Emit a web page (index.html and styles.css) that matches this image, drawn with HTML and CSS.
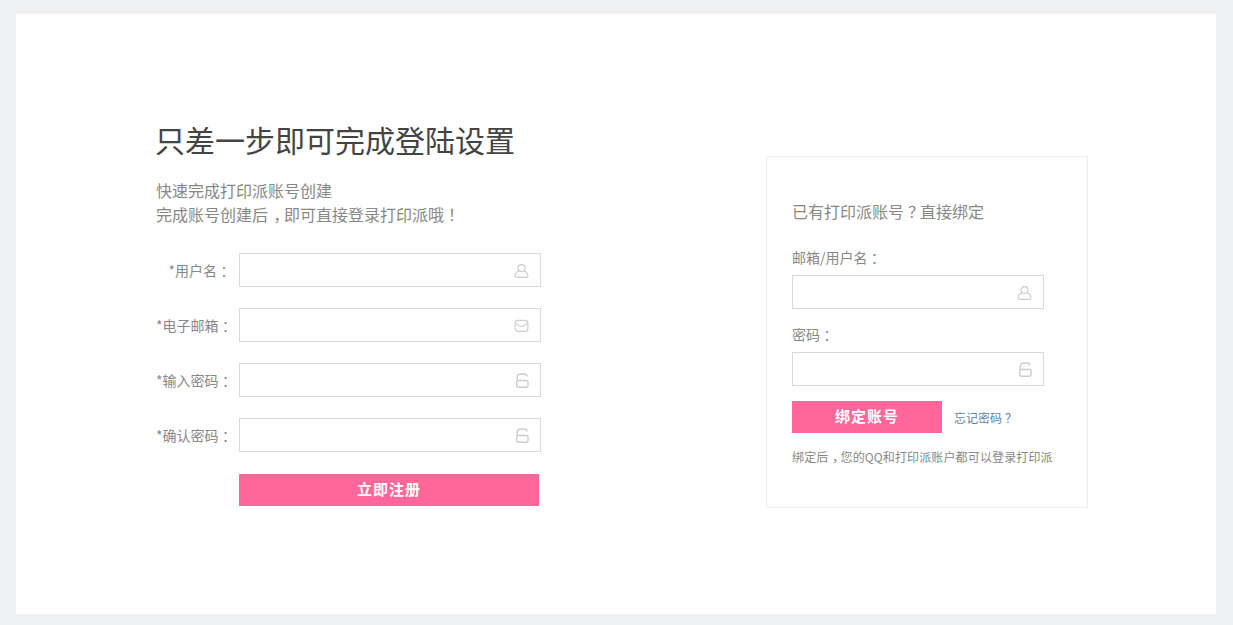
FILE: index.html
```html
<!DOCTYPE html>
<html lang="zh-CN">
<head>
    <meta charset="UTF-8">
    <meta name="viewport" content="width=device-width, initial-scale=1.0">
    <title>完成登陆设置</title>
    <link rel="stylesheet" href="styles.css">
</head>
<body>
    <svg class="icon-defs" width="0" height="0">
        <symbol id="icon-user" viewBox="0 0 16 16">
            <circle cx="8" cy="5.4" r="3.7" fill="none" stroke="currentColor" stroke-width="1.2"/>
            <path d="M5.4 8.6 C3 9.4 1.2 11 1.2 13.4 C1.2 14.6 1.9 15.3 3 15.3 H13 C14.1 15.3 14.8 14.6 14.8 13.4 C14.8 11 13 9.4 10.6 8.6" fill="none" stroke="currentColor" stroke-width="1.2"/>
        </symbol>
        <symbol id="icon-mail" viewBox="0 0 16 16">
            <rect x="1.2" y="2.5" width="13.6" height="11.7" rx="3" fill="none" stroke="currentColor" stroke-width="1.2"/>
            <path d="M1.5 5.2 C4 7.6 6 9 8 9 C10 9 12 7.6 14.5 5.2" fill="none" stroke="currentColor" stroke-width="1.2"/>
        </symbol>
        <symbol id="icon-lock" viewBox="0 0 16 16">
            <path d="M3.4 8 V5 C3.4 2.4 5.2 1 8 1 H10.5 C12.6 1 13.8 2 14 3.6" fill="none" stroke="currentColor" stroke-width="1.5"/>
            <rect x="2.8" y="8" width="12.2" height="7.2" rx="1.8" fill="none" stroke="currentColor" stroke-width="1.5"/>
        </symbol>
    </svg>

    <div class="panel">
        <div class="register">
            <h1>只差一步即可完成登陆设置</h1>
            <p class="intro">快速完成打印派账号创建<br>完成账号创建后<span class="punct comma">，</span>即可直接登录打印派哦<span class="punct">！</span></p>
            <form>
                <div class="row">
                    <label for="username">*用户名<span class="punct">：</span></label>
                    <div class="field">
                        <input type="text" id="username">
                        <svg class="icon"><use href="#icon-user"/></svg>
                    </div>
                </div>
                <div class="row">
                    <label for="email">*电子邮箱<span class="punct">：</span></label>
                    <div class="field">
                        <input type="text" id="email">
                        <svg class="icon"><use href="#icon-mail"/></svg>
                    </div>
                </div>
                <div class="row">
                    <label for="password">*输入密码<span class="punct">：</span></label>
                    <div class="field">
                        <input type="password" id="password">
                        <svg class="icon"><use href="#icon-lock"/></svg>
                    </div>
                </div>
                <div class="row">
                    <label for="confirm">*确认密码<span class="punct">：</span></label>
                    <div class="field">
                        <input type="password" id="confirm">
                        <svg class="icon"><use href="#icon-lock"/></svg>
                    </div>
                </div>
                <button type="submit" class="btn btn-register">立即注册</button>
            </form>
        </div>

        <div class="bind">
            <h2>已有打印派账号<span class="punct">？</span>直接绑定</h2>
            <form>
                <label class="bind-label" for="account">邮箱/用户名<span class="punct">：</span></label>
                <div class="field field-short">
                    <input type="text" id="account">
                    <svg class="icon"><use href="#icon-user"/></svg>
                </div>
                <label class="bind-label second" for="bindPassword">密码<span class="punct">：</span></label>
                <div class="field field-short">
                    <input type="password" id="bindPassword">
                    <svg class="icon"><use href="#icon-lock"/></svg>
                </div>
                <div class="actions">
                    <button type="submit" class="btn btn-bind">绑定账号</button>
                    <a href="#" class="forgot">忘记密码<span class="punct">？</span></a>
                </div>
                <p class="note">绑定后<span class="punct comma">，</span>您的QQ和打印派账户都可以登录打印派</p>
            </form>
        </div>
    </div>
</body>
</html>
```

FILE: styles.css
```css
body {
    font-family: "Noto Sans CJK SC", "Liberation Sans", sans-serif;
    margin: 0;
    padding: 0;
    background-color: #eff0f2;
    color: #888;
}
.icon-defs {
    display: block;
    height: 0;
}
.panel {
    display: flex;
    align-items: flex-start;
    box-sizing: border-box;
    width: 1200px;
    height: 600px;
    margin: 14px 0 11px 16px;
    padding: 105px 0 0 140px;
    background-color: #fff;
}
.register {
    width: 610px;
}
/* half width glyph with padding, so the punctuation sits mid em box */
.punct {
    font-feature-settings: "halt";
    text-spacing-trim: space-all;
    padding: 0 0.25em;
}
.comma {
    padding: 0 0.18em 0 0.32em;
}
h1 {
    margin: 0 0 0 -1px;
    font-size: 30px;
    font-weight: 400;
    line-height: 40px;
    color: #444;
}
.intro {
    margin: 19px 0 27px;
    font-size: 16px;
    line-height: 24px;
    color: #888;
}
.row {
    display: flex;
    align-items: center;
    margin-bottom: 21px;
}
.row label {
    width: 75px;
    margin-right: 8px;
    font-size: 14px;
    text-align: right;
    white-space: nowrap;
}
.field {
    display: flex;
    align-items: center;
    box-sizing: border-box;
    width: 302px;
    height: 34px;
    padding-right: 11px;
    border: 1px solid #d9d9d9;
}
.field-short {
    width: 252px;
}
.field input {
    flex: 1;
    min-width: 0;
    height: 100%;
    padding: 0 10px;
    border: none;
    outline: none;
    background: none;
}
.icon {
    width: 15px;
    height: 15px;
    color: #ccc;
}
.btn {
    display: block;
    height: 32px;
    padding: 0 0 4px;
    border: none;
    background-color: #ff6699;
    color: #fff;
    font-family: inherit;
    font-size: 15px;
    font-weight: 700;
    letter-spacing: 1px;
    cursor: pointer;
}
.btn-register {
    width: 300px;
    margin: 22px 0 0 83px;
}
.btn-bind {
    width: 150px;
}
.bind {
    box-sizing: border-box;
    width: 322px;
    height: 352px;
    margin-top: 37px;
    padding: 42px 25px 0;
    border: 1px solid #eee;
}
h2 {
    margin: 0 0 24px;
    font-size: 16px;
    font-weight: 400;
    line-height: 24px;
    color: #888;
}
.bind-label {
    display: block;
    margin-bottom: 8px;
    font-size: 14px;
    line-height: 20px;
}
.bind-label.second {
    margin-top: 15px;
}
.actions {
    display: flex;
    align-items: center;
    gap: 12px;
    margin-top: 15px;
}
.forgot {
    font-size: 12px;
    color: #5b85ab;
    text-decoration: none;
}
.note {
    margin: 14px 0 0;
    font-size: 12px;
    line-height: 20px;
    letter-spacing: 0.13px;
    white-space: nowrap;
}
```
